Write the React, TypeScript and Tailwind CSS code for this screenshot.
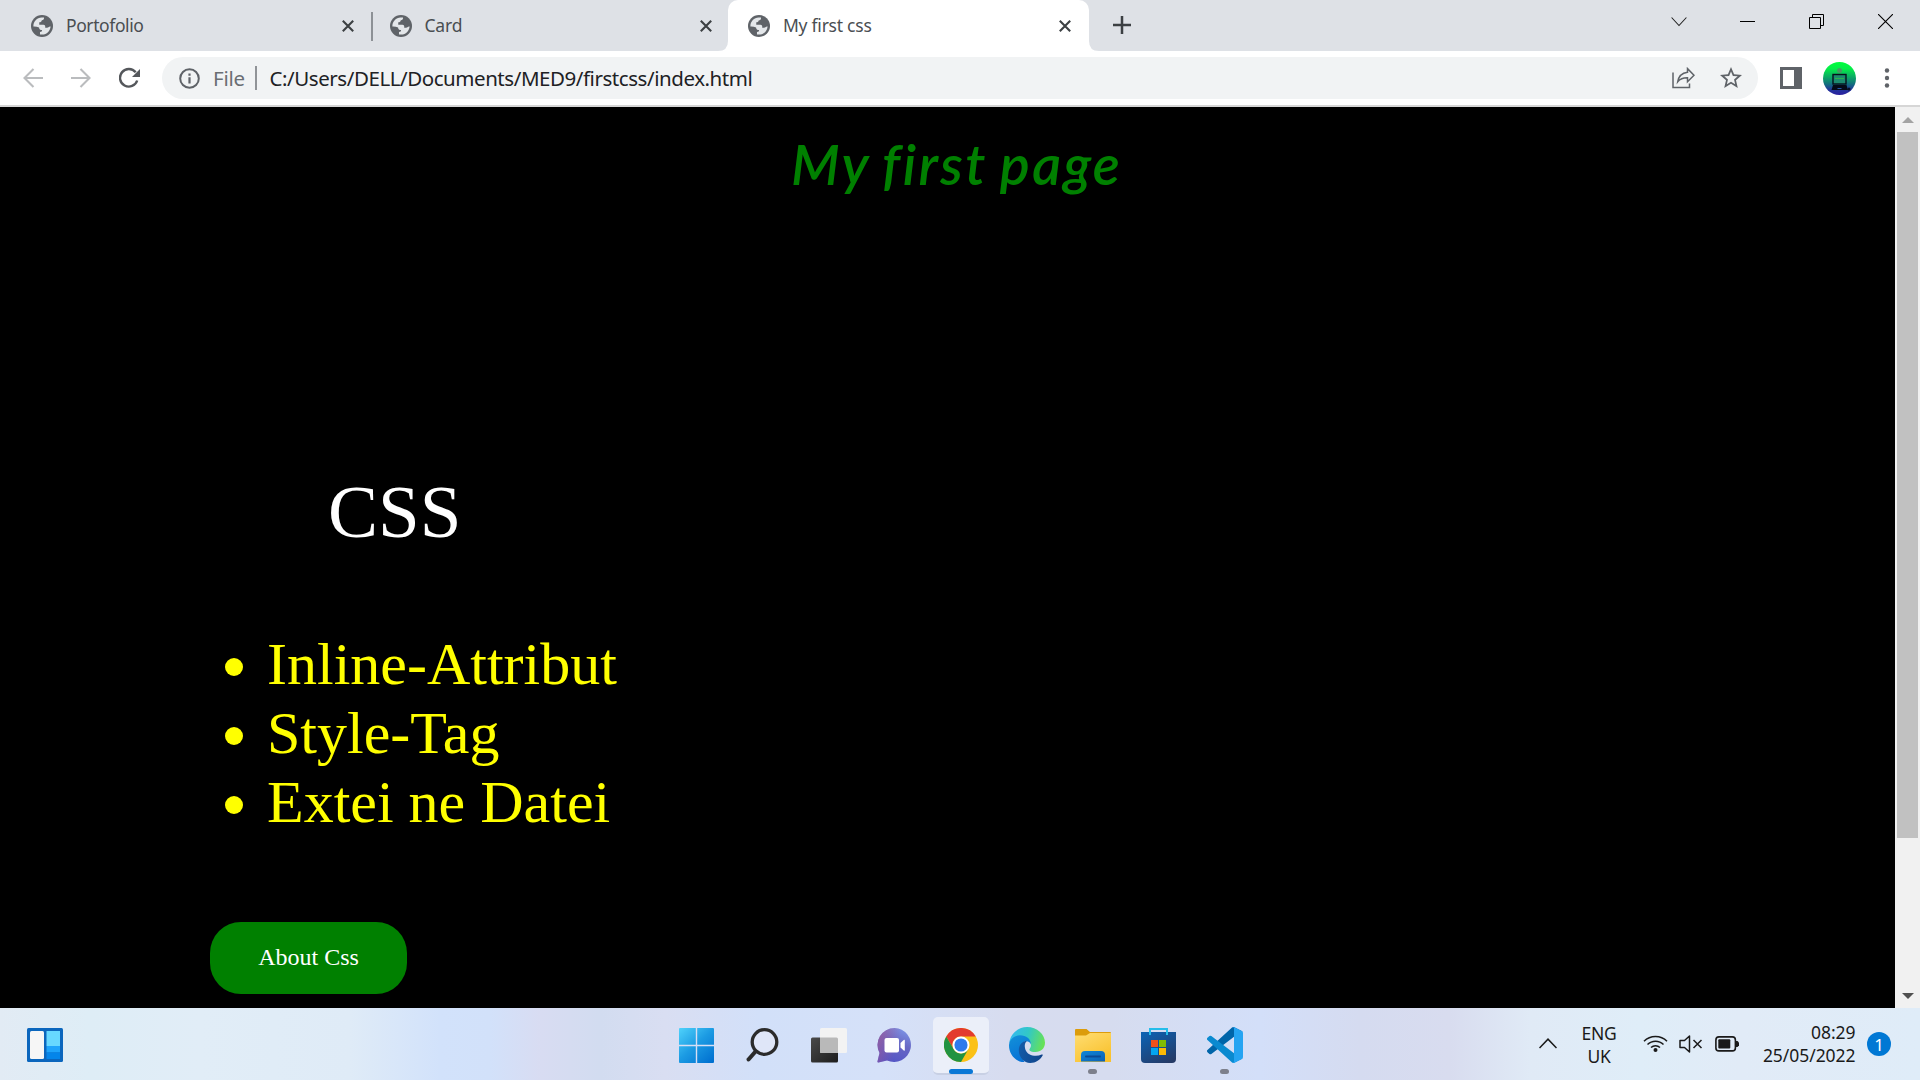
import React from 'react';

const UI = "font-['Noto_Sans','Open_Sans',sans-serif]";

function Globe() {
  return (
    <svg className="h-[22px] w-[22px] shrink-0" viewBox="0 0 24 24">
      <circle cx="12" cy="12" r="12" fill="#5f6368" />
      <path d="M2.6 12.6C2.4 7.2 6.6 2.8 11.6 2.7h2.6c.2 1.900-.700 3-2.400 3.100-.300 1.600-1.200 2.200-2.800 2.200v2.500h4.600c1.200 0 1.900.8 1.900 1.900v1.500h2.100c1.300 0 1.600-1.700 3.800-1.400-.400 4.800-4.200 8.700-9.100 8.900-.900 0-1.700-.100-2.500-.200v-2.600c1.800-.200 2.300-1 2.300-2.300-2.100 0-3.100-.900-3.300-2.800-1.800-.700-3.900-1-6.200-.900z" fill="#e4e7ea" />
    </svg>
  );
}

function TabClose() {
  return (
    <svg className="h-3 w-3 shrink-0" viewBox="0 0 12 12" fill="none" stroke="#3c4043" strokeWidth="2.100">
      <path d="M.8.8l10.400 10.400M11.200.8L.8 11.200" />
    </svg>
  );
}

function TabStrip() {
  return (
    <div className="flex h-[51px] bg-[#dee1e6] text-[17.500px] text-[#4a4e52]">
      <div className="flex h-[51px] w-[371px] items-center pr-[17px] pl-[31px]">
        <Globe />
        <span className="ml-[13px] flex-1 tracking-[-0.400px]">Portofolio</span>
        <TabClose />
      </div>
      <div className="mt-3 h-[29px] w-[1.500px] bg-[#8d9196]" />
      <div className="flex h-[51px] w-[345.500px] items-center pl-[17px]">
        <Globe />
        <span className="ml-[13px] flex-1 tracking-[-0.200px]">Card</span>
        <TabClose />
        <div className="w-[6px]" />
      </div>
      <div className="flex w-[382px] shrink-0">
        <svg className="mt-auto h-[10px] w-[10px] shrink-0" viewBox="0 0 10 10">
          <path d="M10 0v10H0Q10 10 10 0z" fill="#fff" />
        </svg>
        <div className="flex h-[51px] w-[361px] items-center rounded-t-[10px] bg-white pr-[18px] pl-[20px]">
          <Globe />
          <span className="ml-[13px] flex-1 tracking-[-0.250px]">My first css</span>
          <TabClose />
        </div>
        <svg className="mt-auto h-[10px] w-[10px] shrink-0" viewBox="0 0 10 10">
          <path d="M0 0v10h10Q0 10 0 0z" fill="#fff" />
        </svg>
      </div>
      <svg className="mt-4 ml-[12.500px] h-[18px] w-[18px]" viewBox="0 0 18 18" stroke="#3c4043" strokeWidth="2.500">
        <path d="M9 0v18M0 9h18" />
      </svg>
      <div className="mt-[14px] mr-[27px] ml-auto flex">
        <svg className="mr-[53px] h-[15px] w-[16px]" viewBox="0 0 16 15" fill="none" stroke="#222" strokeWidth="1.100">
          <path d="M.6 3.500L8 11.500l7.400-8" />
        </svg>
        <svg className="mr-[54px] h-[15px] w-[15px]" viewBox="0 0 15 15" stroke="#000">
          <path d="M0 7.500h15" />
        </svg>
        <svg className="mr-[54px] h-[15px] w-[15px]" viewBox="0 0 15 15" fill="none" stroke="#000">
          <path d="M.5 3.500h11v11H.5zM3.500 3V.5h11v11H12" />
        </svg>
        <svg className="h-[15px] w-[15px]" viewBox="0 0 15 15" stroke="#000" strokeWidth="1.100">
          <path d="M0 0l15 15M15 0L0 15" />
        </svg>
      </div>
    </div>
  );
}

function Toolbar() {
  return (
    <div className="flex h-[56px] items-center border-b-2 border-[#d6d6d6] bg-white pl-[23px]">
      <svg className="h-5 w-5" viewBox="0 0 20 20" fill="none" stroke="#babcbe" strokeWidth="2.100">
        <path d="M20 10H1.500M10.500 1L1.500 10l9 9" />
      </svg>
      <svg className="ml-7 h-5 w-5" viewBox="0 0 20 20" fill="none" stroke="#babcbe" strokeWidth="2.100">
        <path d="M0 10h18.500M9.500 1l9 9-9 9" />
      </svg>
      <svg className="ml-[28px] h-[22px] w-[22px]" viewBox="0 0 22 22">
        <path d="M18.200 13.500a8.800 8.800 0 1 1-1.500-8.200" fill="none" stroke="#54575b" strokeWidth="2.400" />
        <path d="M21 2v8h-8z" fill="#54575b" />
      </svg>
      <div className="ml-[21px] flex h-[42px] w-[1596px] items-center rounded-full bg-[#f1f3f4] pr-[16px] pl-[17px] text-[20.500px]">
        <svg className="h-[21px] w-[21px]" viewBox="0 0 21 21">
          <circle cx="10.500" cy="10.500" r="9.300" fill="none" stroke="#5f6368" strokeWidth="2" />
          <path d="M9.400 9.300h2.200v6.200H9.400zM9.400 5.500h2.200v2.200H9.400z" fill="#5f6368" />
        </svg>
        <span className="ml-[13px] w-[42px] tracking-[-0.200px] text-[#6a6e73]">File</span>
        <div className="h-6 w-[1.500px] bg-[#909397]" />
        <span className="ml-[13px] tracking-[-0.440px] whitespace-nowrap text-[#202124]">
          C:/Users/DELL/Documents/MED9/firstcss/index.html
        </span>
        <svg className="ml-auto h-[22px] w-[23px]" viewBox="0 0 23 22" fill="none" stroke="#5f6368" strokeWidth="1.500">
          <path d="M1 5.500V20.500h16.500v-4" />
          <path d="M15.500 1.600l6.500 6.600-6.500 6.500v-3.900c-4.200-.1-7.300 1-9.800 4 .8-5 3.600-8.700 9.800-9.500z" />
        </svg>
        <svg className="ml-[25px] h-[22px] w-[22px]" viewBox="2 2 20 20">
          <path fill="#5f6368" d="M22 9.240l-7.190-.62L12 2 9.190 8.630 2 9.240l5.460 4.730L5.820 21 12 17.270 18.180 21l-1.630-7.030L22 9.240zM12 15.400l-3.760 2.270 1-4.280-3.320-2.880 4.380-.38L12 6.100l1.710 4.040 4.380.38-3.320 2.880 1 4.280L12 15.400z" />
        </svg>
      </div>
      <svg className="ml-[22px] h-[22px] w-[22px]" viewBox="0 0 22 22">
        <path d="M0 0h22v22H0zM3 3v16h11V3z" fillRule="evenodd" fill="#5f6368" />
      </svg>
      <svg className="ml-[21px] h-[33px] w-[33px]" viewBox="0 0 33 33">
        <defs>
          <linearGradient id="avatar" x2="0" y2="1">
            <stop stopColor="#00ff3c" />
            <stop offset=".2" stopColor="#05ee48" />
            <stop offset=".65" stopColor="#12747b" />
            <stop offset=".85" stopColor="#22339c" />
            <stop offset="1" stopColor="#2c1fa0" />
          </linearGradient>
        </defs>
        <circle cx="16.500" cy="16.500" r="16.500" fill="url(#avatar)" />
        <circle cx="16.500" cy="8.500" r="2.500" fill="#4a9a62" />
        <rect x="10" y="12.500" width="13" height="9.500" fill="#1c8a6e" stroke="#05101c" strokeWidth="1.400" />
        <path d="M12 16.500h9" stroke="#28b548" />
        <path d="M10 23h13.500l1.500 5H8.500z" fill="#040a18" />
        <path d="M14.500 26.500h4" stroke="#2457a8" />
        <circle cx="26" cy="27" r="1.500" fill="#0a1024" />
      </svg>
      <svg className="ml-[28px] h-[20px] w-[6px]" viewBox="0 0 6 20" fill="#5f6368">
        <circle cx="3" cy="2.500" r="2.200" />
        <circle cx="3" cy="10" r="2.200" />
        <circle cx="3" cy="17.500" r="2.200" />
      </svg>
    </div>
  );
}

function Page() {
  return (
    <div className="flex h-[901px]">
      <div className="flex flex-1 flex-col overflow-hidden bg-black font-['Liberation_Serif',serif]">
        <h1 className="mt-[22px] h-[70px] pl-[791px] font-['Lucida_Handwriting','Lucida_Calligraphy',Lato,cursive] text-[56px] leading-[70px] font-semibold tracking-[2.400px] [word-spacing:-3px] whitespace-nowrap text-[#008000] italic">
          My first page
        </h1>
        <p className="mt-[270px] ml-[328px] text-[75px] leading-[86px] text-white">CSS</p>
        <ul className="mt-[75px] text-[60px] leading-[69px] text-[#ffff00]">
          {['Inline-Attribut', 'Style-Tag', 'Extei ne Datei'].map((item) => (
            <li key={item} className="flex items-center pl-[225px]">
              <span className="mt-[4px] mr-[24px] h-[18px] w-[18px] rounded-full bg-[#ffff00]" />
              {item}
            </li>
          ))}
        </ul>
        <button className="mt-[85px] ml-[210px] h-[72px] w-[197px] shrink-0 rounded-[31px] bg-[#008000] pb-[2px] text-[24px] text-white">
          About Css
        </button>
      </div>
      <div className="flex w-[25px] flex-col items-center bg-[#f1f1f1]">
        <svg className="mt-[10px] h-[6px] w-[12px] shrink-0" viewBox="0 0 12 6">
          <path d="M6 0l6 6H0z" fill="#a3a3a3" />
        </svg>
        <div className="mt-[9px] h-[706px] w-[21px] bg-[#c1c1c1]" />
        <svg className="mt-auto mb-[9px] h-[6px] w-[12px] shrink-0" viewBox="0 0 12 6">
          <path d="M0 0h12L6 6z" fill="#505050" />
        </svg>
      </div>
    </div>
  );
}

function StartIcon() {
  return (
    <svg className="h-[35px] w-[35px]" viewBox="0 0 35 35">
      <defs>
        <linearGradient id="win" gradientUnits="userSpaceOnUse" x1="0" y1="0" x2="32" y2="35">
          <stop stopColor="#4fd2fb" />
          <stop offset=".5" stopColor="#1c9be3" />
          <stop offset="1" stopColor="#0070d0" />
        </linearGradient>
      </defs>
      <path fill="url(#win)" d="M1 0h15.800v16.800H0V1a1 1 0 0 1 1-1zM18.200 0H34a1 1 0 0 1 1 1v15.800H18.200zM0 18.200h16.800V35H1a1 1 0 0 1-1-1zM18.200 18.200H35V34a1 1 0 0 1-1 1H18.200z" />
    </svg>
  );
}

function SearchIcon() {
  return (
    <svg className="h-[35px] w-[35px]" viewBox="0 0 35 35" fill="none" stroke="#2b2b2b">
      <circle cx="19.500" cy="14" r="12.300" strokeWidth="3.300" fill="#dfe6f8" />
      <path d="M10.500 23.500l-7 8" strokeWidth="4" strokeLinecap="round" />
    </svg>
  );
}

function TaskViewIcon() {
  return (
    <svg className="h-[35px] w-[36px]" viewBox="0 0 36 35">
      <defs>
        <linearGradient id="tvd" x2="1" y2="1">
          <stop stopColor="#4a4a4a" />
          <stop offset="1" stopColor="#1d1d1d" />
        </linearGradient>
      </defs>
      <rect x="0" y="9.500" width="27" height="25" rx="1.500" fill="url(#tvd)" />
      <rect x="9" y="0" width="27" height="25" rx="1.500" fill="#f3f3f3" />
      <path d="M9 9.500h16.500A1.500 1.500 0 0 1 27 11v14H10.500A1.500 1.500 0 0 1 9 23.500z" fill="#b9b9b9" />
    </svg>
  );
}

function ChatIcon() {
  return (
    <svg className="h-[35px] w-[35px]" viewBox="0 0 35 35">
      <defs>
        <linearGradient id="chat" x1=".8" y1="0" x2=".4" y2="1">
          <stop stopColor="#7d96e8" />
          <stop offset=".45" stopColor="#6868c4" />
          <stop offset="1" stopColor="#5355c6" />
        </linearGradient>
        <linearGradient id="chatEdge" x1="0" x2="1" y1=".3" y2=".6">
          <stop stopColor="#a05a98" stopOpacity=".7" />
          <stop offset=".6" stopColor="#a05a98" stopOpacity="0" />
        </linearGradient>
      </defs>
      <path d="M17.500 0A17 17 0 1 1 10 32.500L1.500 34.500c-1 .2-1.200-.5-1-1.300L2.500 25A17 17 0 0 1 17.500 0z" fill="url(#chat)" />
      <path d="M17.500 0A17 17 0 1 1 10 32.500L1.500 34.500c-1 .2-1.200-.5-1-1.300L2.500 25A17 17 0 0 1 17.500 0z" fill="url(#chatEdge)" />
      <rect x="7.500" y="10" width="14.500" height="14.500" rx="2" fill="#fff" />
      <path d="M23.500 15l3.500-3.200q.8-.4.8.6v9.700q0 1-.8.600L23.500 19.500z" fill="#fff" />
    </svg>
  );
}

function ChromeIcon() {
  return (
    <svg className="h-[34px] w-[34px]" viewBox="0 0 48 48">
      <circle cx="24" cy="24" r="24" fill="#fbc116" />
      <path d="M3.200 12a24 24 0 0 1 41.600 0H24a12 12 0 0 0-10.400 18z" fill="#e33b2e" />
      <path d="M3.200 12a24 24 0 0 0 20.800 36l10.400-18a12 12 0 0 1-20.800 0z" fill="#229342" />
      <circle cx="24" cy="24" r="12" fill="#fff" />
      <circle cx="24" cy="24" r="9.300" fill="#2f7bed" />
    </svg>
  );
}

function EdgeIcon() {
  return (
    <svg className="h-[36px] w-[36px]" viewBox="0 0 256 256">
      <defs>
        <linearGradient id="edgeA" x1="0" y1=".3" x2="1" y2=".5">
          <stop stopColor="#35b9f1" />
          <stop offset=".5" stopColor="#32c8c6" />
          <stop offset="1" stopColor="#68e255" />
        </linearGradient>
        <linearGradient id="edgeB" x1=".2" y1="0" x2=".6" y2="1">
          <stop stopColor="#128fd8" />
          <stop offset="1" stopColor="#0670d6" />
        </linearGradient>
        <linearGradient id="edgeC" x1="0" y1=".4" x2="1" y2=".6">
          <stop stopColor="#125aa8" />
          <stop offset="1" stopColor="#10448a" />
        </linearGradient>
      </defs>
      <path d="M2 113C10 48 62 0 128 0c72 0 128 51 128 112 0 40-30 66-67 66-25 0-44-8-44-17 0-7 11-11 11-33 0-26-28-50-66-50-36 0-66 13-88 35z" fill="url(#edgeA)" />
      <path d="M111 249C51 253 0 196 0 134c0-43 35-75 78-75 45 0 77 26 78 65-7-15-21-24-36-22-28 5-46 38-38 73 5 31 15 55 29 74z" fill="url(#edgeB)" />
      <path d="M130 98C88 101 68 135 70 169c2 46 36 87 81 87 40 0 72-23 88-53 3-6-1-10-7-7-45 22-102 3-115-35-8-26-7-48 13-63z" fill="url(#edgeC)" />
    </svg>
  );
}

function FolderIcon() {
  return (
    <svg className="h-[34px] w-[36px]" viewBox="0 0 36 34">
      <defs>
        <linearGradient id="fold" x2=".6" y2="1">
          <stop stopColor="#ffdd72" />
          <stop offset="1" stopColor="#f9c22f" />
        </linearGradient>
        <linearGradient id="foldBlue" x2="1" y2="1">
          <stop stopColor="#0f86d8" />
          <stop offset="1" stopColor="#0c61b4" />
        </linearGradient>
      </defs>
      <path d="M1 1h10.500l3.500 3h20a1 1 0 0 1 1 1v12H0V2a1 1 0 0 1 1-1z" fill="#dc9c0b" />
      <path d="M0 7.500h11L15 5h21v29H0z" fill="url(#fold)" />
      <path d="M6 33.500V27q0-4 4-4h16q4 0 4 4v6.500z" fill="url(#foldBlue)" />
      <path d="M11 28.500h14" stroke="#0a4a95" strokeWidth="2" strokeLinecap="round" />
    </svg>
  );
}

function StoreIcon() {
  return (
    <svg className="h-[35px] w-[35px]" viewBox="0 0 35 35">
      <defs>
        <linearGradient id="store" x1=".2" y1="0" x2=".8" y2="1">
          <stop stopColor="#0d60b0" />
          <stop offset="1" stopColor="#253a66" />
        </linearGradient>
      </defs>
      <path d="M0 4h35v27a4 4 0 0 1-4 4H4a4 4 0 0 1-4-4z" fill="url(#store)" />
      <path d="M9 7V1h17v6" fill="none" stroke="#25bdea" strokeWidth="2" />
      <path d="M10 12h7v7h-7z" fill="#f1511b" />
      <path d="M18 12h7v7h-7z" fill="#80bb03" />
      <path d="M10 20h7v7h-7z" fill="#04a5f0" />
      <path d="M18 20h7v7h-7z" fill="#fbb905" />
    </svg>
  );
}

function CodeIcon() {
  return (
    <svg className="h-[36px] w-[36px]" viewBox="0 0 100 100">
      <path d="M96.500 10.800L75.900.9a6.200 6.200 0 0 0-7.100 1.200L1.300 63.600a4.200 4.200 0 0 0 0 6.200l5.500 5a4.200 4.200 0 0 0 5.300.2L93.400 13.400c2.700-2.100 6.600-.1 6.600 3.300v-.3a6.300 6.300 0 0 0-3.500-5.600z" fill="#0065a9" />
      <path d="M96.500 89.200l-20.600 9.900a6.200 6.200 0 0 1-7.100-1.200L1.300 36.400a4.200 4.200 0 0 1 0-6.200l5.500-5a4.200 4.200 0 0 1 5.300-.2l81.300 61.600c2.700 2.100 6.600.1 6.600-3.300v.3a6.300 6.300 0 0 1-3.500 5.600z" fill="#0a8ad0" />
      <path d="M75.900 99.100a6.200 6.200 0 0 1-7.100-1.200c2.300 2.300 6.200.7 6.200-2.600V4.700c0-3.300-3.900-4.900-6.200-2.600A6.200 6.200 0 0 1 75.900.9l20.600 9.900A6.300 6.300 0 0 1 100 16.400v67.200a6.300 6.300 0 0 1-3.500 5.600z" fill="#25a4f2" />
    </svg>
  );
}

const apps = [
  { icon: <StartIcon />, mark: 'none' },
  { icon: <SearchIcon />, mark: 'none' },
  { icon: <TaskViewIcon />, mark: 'none' },
  { icon: <ChatIcon />, mark: 'none' },
  { icon: <ChromeIcon />, mark: 'active' },
  { icon: <EdgeIcon />, mark: 'none' },
  { icon: <FolderIcon />, mark: 'open' },
  { icon: <StoreIcon />, mark: 'none' },
  { icon: <CodeIcon />, mark: 'open' },
];

function Taskbar() {
  return (
    <div className="flex h-[72px] bg-[linear-gradient(90deg,#e2ebf4_0px,#deedf6_90px,#e1edf7_200px,#dfebf7_350px,#d2e2fb_440px,#d2e1fa_490px,#d8dcf2_540px,#d2dcf0_600px,#d9def2_665px,#d2e0f9_760px,#d5e1f9_880px,#d7dcef_1010px,#d6dcef_1110px,#d3dff9_1260px,#d5dbf0_1360px,#d8dcef_1450px,#e0eaf6_1530px,#dfedf8_1640px,#e1ebf7_1740px,#dfecf8_1920px)]">
      <svg className="mt-[20px] ml-[27px] h-[34px] w-[36px]" viewBox="0 0 36 34">
        <rect width="36" height="34" rx="1.500" fill="#0b66bd" />
        <rect x="3" y="3" width="14" height="28" rx="1.500" fill="#f6f6f6" />
        <path d="M19.500 3H33v15H19.500z" fill="#67d8ff" />
        <path d="M19.500 18H33v6.500H19.500z" fill="#1ea4fb" />
        <path d="M19.500 24.500H33V31H19.500z" fill="#0485ea" />
      </svg>
      <div className="ml-[600.500px] flex">
        {apps.map((app, i) => (
          <div key={i} className="flex h-[72px] w-[66px] flex-col items-center">
            <div
              className={
                app.mark === 'active'
                  ? 'mt-[9px] flex h-[58px] w-[56px] flex-col items-center rounded-[5px] border-b-2 border-[#c8d0e4] bg-[#ebeff9]'
                  : 'mt-[9px] flex h-[58px] w-[56px] flex-col items-center'
              }
            >
              <div className="mt-[10px] flex h-[36px] items-center">{app.icon}</div>
            </div>
            {app.mark === 'active' && <div className="-mt-[6px] h-[5px] w-6 rounded-full bg-[#0a78d6]" />}
            {app.mark === 'open' && <div className="-mt-[6px] h-[5px] w-[9px] rounded-full bg-[#7d808c]" />}
          </div>
        ))}
      </div>
      <svg className="mt-[30px] ml-[281.500px] h-[11px] w-[18px]" viewBox="0 0 18 11" fill="none" stroke="#1a1a1a" strokeWidth="1.500">
        <path d="M.5 10L9 1.200 17.500 10" />
      </svg>
      <div className="mt-[14px] ml-[20px] w-[44px] text-center text-[17.500px] leading-[23px] tracking-[-0.300px] text-[#1a1a1a]">
        <div>ENG</div>
        <div>UK</div>
      </div>
      <svg className="mt-[25px] ml-[22px] h-[20px] w-[25px]" viewBox="0 0 25 20" fill="none" stroke="#1a1a1a" strokeWidth="1.500">
        <path d="M1 8.300a16 16 0 0 1 23 0M4.500 11.500a11.300 11.300 0 0 1 16 0M8 14.500a6.500 6.500 0 0 1 9 0" />
        <circle cx="12.500" cy="17" r="2" fill="#1a1a1a" stroke="none" />
      </svg>
      <svg className="mt-[27px] ml-[11px] h-[18px] w-[24px]" viewBox="0 0 24 18" fill="none" stroke="#1a1a1a" strokeWidth="1.500">
        <path d="M1 5.500h4.500L10.500 1v16l-5-4.500H1z" strokeLinejoin="round" />
        <path d="M14.500 5l8 8M22.500 5l-8 8" />
      </svg>
      <svg className="mt-[28px] ml-[12px] h-[16px] w-[25px]" viewBox="0 0 25 16">
        <rect x=".9" y=".9" width="19.500" height="14" rx="3" fill="none" stroke="#1a1a1a" strokeWidth="1.600" />
        <rect x="3.300" y="3.300" width="12" height="9.300" rx="1" fill="#1a1a1a" />
        <path d="M21 5h1.500l1.500 1.500v3L22.500 11H21z" fill="#1a1a1a" />
      </svg>
      <div className="mt-[13px] ml-auto text-right text-[17.500px] leading-[23px] tracking-[-0.050px] text-[#1a1a1a]">
        <div>08:29</div>
        <div>25/05/2022</div>
      </div>
      <div className="mt-6 mr-[29px] ml-[11.500px] flex h-6 w-6 items-center justify-center rounded-full bg-[#0078d4] text-[17px] leading-none text-white">
        1
      </div>
    </div>
  );
}

export default function App() {
  return (
    <div className={`h-[1080px] w-[1920px] overflow-hidden ${UI}`}>
      <TabStrip />
      <Toolbar />
      <Page />
      <Taskbar />
    </div>
  );
}
